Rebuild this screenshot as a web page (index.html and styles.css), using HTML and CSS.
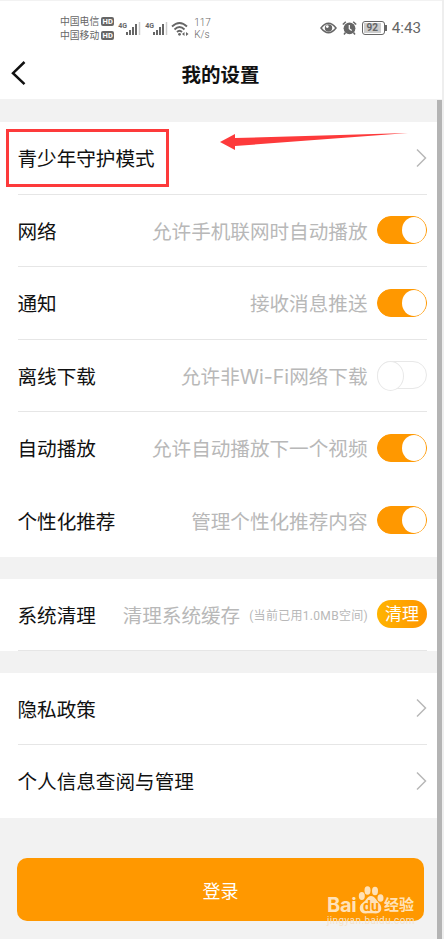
FILE: index.html
```
<!DOCTYPE html>
<html lang="zh-Hans">

<head>
    <meta charset="UTF-8">
    <meta name="viewport" content="width=device-width, initial-scale=1.0">
    <title>我的设置</title>
    <link rel="stylesheet" href="styles.css">
</head>

<body>
    <div class="phone">
        <div class="status-bar">
            <div class="carriers">
                <div class="carrier">中国电信<span class="hd">HD</span></div>
                <div class="carrier">中国移动<span class="hd">HD</span></div>
            </div>
            <div class="signal">
                <span>4G</span>
                <svg width="15" height="13" viewBox="0 0 15 13">
                    <path d="M1 10v3M4 8v5M7 5v8M10 2v11" stroke="#666" stroke-width="2"/>
                    <path d="M13.500 0v13" stroke="#ccc" stroke-width="1.500"/>
                </svg>
            </div>
            <div class="signal">
                <span>4G</span>
                <svg width="15" height="13" viewBox="0 0 15 13">
                    <path d="M1 10v3M4 8v5M7 5v8M10 2v11" stroke="#666" stroke-width="2"/>
                    <path d="M13.500 0v13" stroke="#ccc" stroke-width="1.500"/>
                </svg>
            </div>
            <svg class="wifi" width="18" height="16" viewBox="0 0 18 16" fill="none" stroke="#666" stroke-width="1.800">
                <path d="M1 5.500Q8.500-1.500 16 5.500M3.500 8.500Q8.500 3.500 13.500 8.500M6 11Q8.500 8.500 11 11"/>
                <circle cx="8.500" cy="13.300" r="1.400" fill="#666" stroke="none"/>
                <path d="M11 13l2.500-2v4zM17.500 13l-2.500-2v4z" fill="#666" stroke="none"/>
            </svg>
            <div class="speed">117<br>K/s</div>
            <div class="status-right">
                <svg width="17" height="12" viewBox="0 0 17 12">
                    <path d="M1 6Q8.500-3.500 16 6Q8.500 15.500 1 6z" fill="none" stroke="#666" stroke-width="1.500"/>
                    <circle cx="8.500" cy="6" r="3.700" fill="#666"/>
                    <circle cx="7.300" cy="4.600" r="1.400" fill="#fff"/>
                </svg>
                <svg class="alarm" width="15" height="14" viewBox="0 0 15 14">
                    <circle cx="7.500" cy="7.300" r="5.900" fill="#666"/>
                    <path d="M.8 3.500l3-2.700M14.200 3.500l-3-2.700M3.500 11.500l-1.500 2M11.500 11.500l1.500 2" stroke="#666" stroke-width="1.500"/>
                    <path d="M7.300 4v3.700l2.400 1.800" fill="none" stroke="#fff" stroke-width="1.200"/>
                </svg>
                <div class="battery"><span>92</span></div>
                <div class="clock">4:43</div>
            </div>
        </div>

        <div class="nav-bar">
            <svg class="back" width="16" height="26" viewBox="0 0 16 26">
                <path d="M13.500 1L2 12.200l11.500 11" fill="none" stroke="#111" stroke-width="2.500"/>
            </svg>
            <h1>我的设置</h1>
        </div>

        <div class="section">
            <div class="row">
                <span class="label">青少年守护模式</span>
                <svg class="arrow" width="12" height="20" viewBox="0 0 12 20"><path d="M2 1.500L10.500 10 2 18.500"/></svg>
            </div>
            <div class="row">
                <span class="label">网络</span>
                <span class="desc">允许手机联网时自动播放</span>
                <span class="switch on"></span>
            </div>
            <div class="row">
                <span class="label">通知</span>
                <span class="desc">接收消息推送</span>
                <span class="switch on"></span>
            </div>
            <div class="row">
                <span class="label">离线下载</span>
                <span class="desc">允许非<span class="latin">Wi-Fi</span>网络下载</span>
                <span class="switch"></span>
            </div>
            <div class="row no-line">
                <span class="label">自动播放</span>
                <span class="desc">允许自动播放下一个视频</span>
                <span class="switch on"></span>
            </div>
            <div class="row no-line">
                <span class="label">个性化推荐</span>
                <span class="desc">管理个性化推荐内容</span>
                <span class="switch on"></span>
            </div>
        </div>

        <div class="section">
            <div class="row">
                <span class="label">系统清理</span>
                <span class="desc">清理系统缓存</span>
                <span class="cache">(当前已用1.0MB空间)</span>
                <button class="clean-btn">清理</button>
            </div>
        </div>

        <div class="section">
            <div class="row">
                <span class="label">隐私政策</span>
                <svg class="arrow" width="12" height="20" viewBox="0 0 12 20"><path d="M2 1.500L10.500 10 2 18.500"/></svg>
            </div>
            <div class="row no-line">
                <span class="label">个人信息查阅与管理</span>
                <svg class="arrow" width="12" height="20" viewBox="0 0 12 20"><path d="M2 1.500L10.500 10 2 18.500"/></svg>
            </div>
        </div>

        <button class="login-btn">登录</button>

        <!-- Annotations over the page -->
        <div class="mark-box"></div>
        <svg class="mark-arrow" width="190" height="20" viewBox="0 0 190 20">
            <path d="M0 10L15 2v4L188 1L15 14v4z" fill="#fd3a3b"/>
        </svg>
        <div class="scrollbar"></div>
        <div class="watermark">
            <div class="logo">
                <span class="bai">Bai</span>
                <svg width="26" height="28" viewBox="0 0 26 28" fill="#ffe2b8">
                    <ellipse cx="3.800" cy="10" rx="3" ry="4"/>
                    <ellipse cx="9.500" cy="4.500" rx="3" ry="4.200"/>
                    <ellipse cx="17" cy="5" rx="3" ry="4.200"/>
                    <ellipse cx="22.500" cy="12" rx="3" ry="3.800"/>
                    <path d="M13 10c4 0 5 4 8 7s4 10-3 10.500c-3 0-7-.5-10 0C1 28 0 20 4.500 17S9 10 13 10z"/>
                    <text x="5" y="25" class="du">du</text>
                </svg>
                <span class="jingyan">经验</span>
            </div>
            <div class="url">jingyan.baidu.com</div>
        </div>
    </div>
</body>

</html>
```
FILE: styles.css
```
* {
    box-sizing: border-box;
}

body {
    margin: 0;
    background-color: #f2f2f2;
    font-family: Roboto, "Noto Sans CJK SC", sans-serif;
    color: #111;
}

.phone {
    position: relative;
    width: 444px;
    height: 939px;
    padding-top: 1px;
    border-right: 2px solid #eee;
    overflow: hidden;
}

.status-bar {
    display: flex;
    align-items: center;
    height: 49px;
    padding: 6px 21px 0 60px;
    background-color: #fff;
    color: #666;
}

.carrier {
    display: flex;
    align-items: center;
    height: 14px;
    font-size: 9.800px;
    line-height: 14px;
}

.hd {
    width: 13px;
    height: 9px;
    margin-left: 2px;
    border-radius: 2px;
    background-color: #666;
    color: #fff;
    font-size: 7.500px;
    font-weight: bold;
    line-height: 9px;
    text-align: center;
}

.signal {
    display: flex;
    align-items: flex-start;
    width: 22px;
    margin-left: 4px;
    font-size: 7px;
    font-weight: bold;
    line-height: 8px;
}

.signal svg {
    flex: none;
    margin: 0 0 0 -1px;
}

.signal + .signal {
    margin-left: 5px;
}

.wifi {
    margin-left: 4px;
}

.speed {
    margin-left: 5px;
    font-size: 10px;
    font-weight: 300;
    line-height: 11.500px;
}

.status-right {
    display: flex;
    align-items: center;
    margin: -1px 0 0 auto;
}

.alarm {
    margin-left: 5px;
}

.battery {
    position: relative;
    width: 23px;
    height: 14px;
    margin-left: 5px;
    padding: 1px;
    border: 1px solid #666;
    border-radius: 3px;
    font-size: 10px;
    font-weight: bold;
    line-height: 10px;
    text-align: center;
}

.battery span {
    display: block;
    width: 17px;
    background-color: #ccc;
}

.battery::after {
    content: "";
    position: absolute;
    top: 3px;
    right: -3px;
    width: 1.500px;
    height: 6px;
    background-color: #666;
}

.clock {
    margin-left: 7px;
    font-size: 15.200px;
}

.nav-bar {
    display: flex;
    align-items: center;
    height: 49px;
    padding: 0 11px 2px;
    background-color: #fff;
}

.nav-bar h1 {
    flex: 1;
    margin: 0 25px 0 0;
    padding-left: 8px;
    font-size: 19.500px;
    font-weight: bold;
    text-align: center;
}

.section {
    margin-top: 21.500px;
    background-color: #fff;
}

.nav-bar + .section {
    margin-top: 23px;
}

.row {
    display: flex;
    align-items: center;
    height: 72.500px;
    margin: 0 15px 0 17.500px;
    border-bottom: 1px solid #e6e6e6;
    font-size: 19.600px;
    white-space: nowrap;
}

.row.no-line {
    border-bottom-color: transparent;
}

.label {
    margin-right: auto;
}

.desc {
    margin-right: 1px;
    color: #b8b8b8;
}

.latin {
    font-family: Inter, sans-serif;
    letter-spacing: 0;
}

.cache {
    margin-left: 8px;
    color: #b8b8b8;
    font-size: 12px;
    letter-spacing: 0.300px;
}

.arrow {
    fill: none;
    stroke: #b8b8b8;
    stroke-width: 1.500;
}

.switch {
    display: flex;
    width: 50px;
    height: 28px;
    margin-left: 8.500px;
    border: 1px solid #e8e8e8;
    border-radius: 14px;
}

.switch::before {
    content: "";
    width: 25px;
    height: 28px;
    margin: -1px;
    border: 1px solid #e8e8e8;
    border-radius: 50%;
    background-color: #fff;
}

.switch.on {
    justify-content: flex-end;
    border-color: #ff9800;
    background-color: #ff9800;
}

.switch.on::before {
    width: 24px;
    height: 26px;
    margin: 0;
    border: none;
}

.clean-btn {
    width: 50px;
    height: 28px;
    margin-left: 9px;
    padding: 0;
    border: none;
    border-radius: 14px;
    background: linear-gradient(90deg, #ffb400, #ff9500);
    color: #fff;
    font-family: inherit;
    font-size: 17px;
    line-height: 28px;
}

.login-btn {
    display: block;
    width: 407px;
    height: 63px;
    margin: 40.500px 0 0 17px;
    border: none;
    border-radius: 10px;
    background-color: #ff9800;
    color: #fff;
    font-family: inherit;
    font-size: 18px;
}

.mark-box {
    position: absolute;
    top: 129px;
    left: 6px;
    width: 163px;
    height: 58px;
    border: 3px solid #fd3a3b;
}

.mark-arrow {
    position: absolute;
    top: 132px;
    left: 220px;
}

.scrollbar {
    position: absolute;
    top: 100px;
    right: 0;
    bottom: 0;
    width: 5px;
    background-color: #b4b4b4;
}

.watermark {
    position: absolute;
    top: 886px;
    left: 327px;
    width: 92px;
    color: #ffe2b8;
}

.logo {
    display: flex;
    align-items: flex-end;
    height: 28px;
    line-height: 18px;
}

.bai {
    width: 31px;
    font-family: Inter, sans-serif;
    font-size: 20px;
    font-weight: bold;
    letter-spacing: -0.300px;
}

.du {
    fill: #ff9800;
    font-size: 14px;
    font-weight: bold;
}

.jingyan {
    font-size: 15px;
    font-weight: bold;
}

.url {
    color: #f5e3cb;
    font-size: 10px;
    line-height: 14px;
    letter-spacing: 0.400px;
}
```
